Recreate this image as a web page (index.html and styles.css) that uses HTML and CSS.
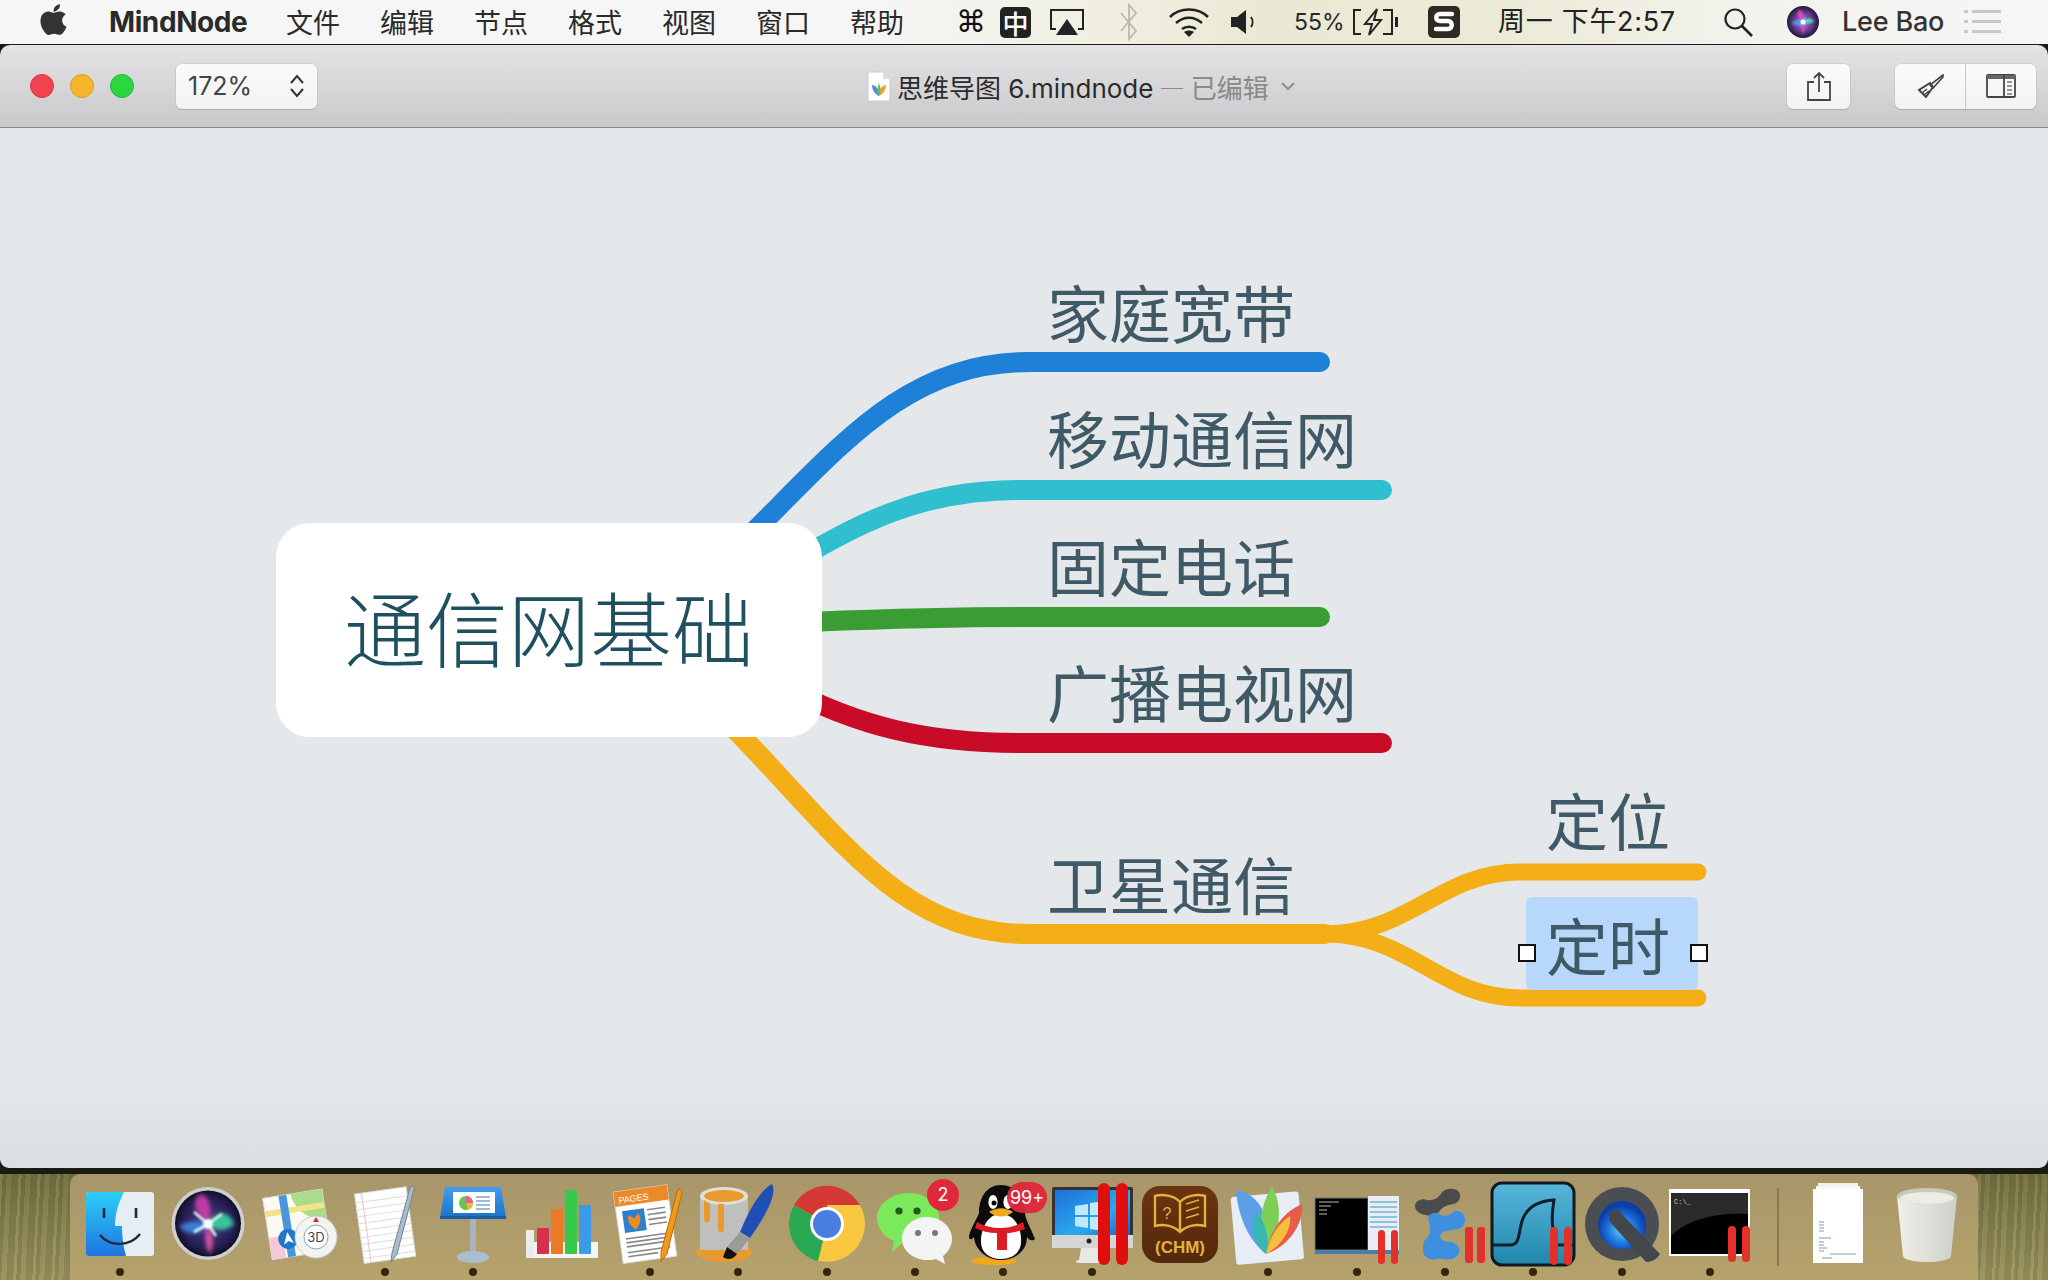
FILE: index.html
```html
<!DOCTYPE html>
<html lang="zh-CN">
<head>
<meta charset="utf-8">
<title>MindNode</title>
<link rel="stylesheet" href="styles.css">
</head>
<body>
<header class="menubar">
  <svg class="apple" viewBox="0 0 24 24"><path d="M17.05 20.28c-.98.95-2.05.8-3.08.35-1.09-.46-2.09-.48-3.24 0-1.44.62-2.2.44-3.06-.35C2.79 15.25 3.51 7.59 9.05 7.31c1.35.07 2.29.74 3.08.8 1.18-.24 2.31-.93 3.57-.84 1.51.12 2.65.72 3.4 1.8-3.12 1.87-2.38 5.98.48 7.13-.57 1.5-1.31 2.99-2.54 4.09zM12.03 7.25c-.15-2.23 1.66-4.07 3.74-4.25.29 2.58-2.34 4.5-3.74 4.25z"/></svg>
  <span class="app-name">MindNode</span>
  <nav class="menu">
    <span>文件</span><span>编辑</span><span>节点</span><span>格式</span><span>视图</span><span>窗口</span><span>帮助</span>
  </nav>
  <div class="tray">
    <span class="cmd-key">⌘</span>
    <span class="ime">中</span>
    <svg class="t-airplay" viewBox="0 0 36 28"><path d="M7 21H2V2h32v19h-5" fill="none" stroke="#222" stroke-width="2"/><path d="M18 11l11 16H7z" fill="#222"/></svg>
    <svg class="t-bt" viewBox="0 0 20 38"><path d="M2 10l15 18-7 8V2l7 8-15 18" fill="none" stroke="#b9b9ae" stroke-width="1.8"/></svg>
    <svg class="t-wifi" viewBox="0 0 42 32"><g fill="none" stroke="#222" stroke-width="2.6"><path d="M2 11C12 1 30 1 40 11"/><path d="M8 17c8-7 18-7 26 0"/><path d="M14 23c4-3 10-3 14 0"/></g><path d="M21 31l-5-5c3-2 7-2 10 0z" fill="#222"/></svg>
    <svg class="t-vol" viewBox="0 0 28 26"><path d="M1 8h6l9-7v24l-9-7H1z" fill="#222"/><path d="M21 8c2 3 2 7 0 10" fill="none" stroke="#222" stroke-width="1.8"/></svg>
    <span class="t-pct">55%</span>
    <svg class="t-batt" viewBox="0 0 47 28"><path d="M9 2H2v24h7M31 2h9v24h-9" fill="none" stroke="#222" stroke-width="2"/><path d="M25 1L13 16h7l-3 11 12-15h-7z" fill="none" stroke="#222" stroke-width="2"/><rect x="43" y="9" width="3" height="10" fill="#222"/></svg>
    <svg class="t-sogou" viewBox="0 0 32 32"><rect width="32" height="32" rx="5" fill="#2d2a20"/><path d="M24 8H12c-5 0-5 7 0 7h8c5 0 5 8 0 8H8" fill="none" stroke="#fff" stroke-width="4.4" stroke-linecap="round"/></svg>
    <span class="t-time">周一 下午2:57</span>
    <svg class="t-search" viewBox="0 0 30 30"><circle cx="12" cy="12" r="9.5" fill="none" stroke="#222" stroke-width="2.2"/><path d="M19 19l10 10" stroke="#222" stroke-width="2.6"/></svg>
    <svg class="t-siri" viewBox="0 0 32 32"><defs><radialGradient id="ts"><stop offset="0" stop-color="#9ff"/><stop offset=".35" stop-color="#8c4fc0"/><stop offset="1" stop-color="#1c1a3a"/></radialGradient><filter id="tsb"><feGaussianBlur stdDeviation=".8"/></filter></defs><circle cx="16" cy="16" r="16" fill="url(#ts)"/><g filter="url(#tsb)"><path d="M16 16C10 11 9 6 13 4c4 3 4 8 3 12z" fill="#e04fb0"/><path d="M16 16c4-5 8-4 11-1-3 3-7 3-11 1z" fill="#4fe0b0"/><path d="M16 16c-3 4-7 4-11 1 3-3 7-3 11-1z" fill="#4f9fe8"/><path d="M16 16c2 4 2 8 0 12-2-4-2-8 0-12z" fill="#e04fb0"/></g><circle cx="16" cy="16" r="2.500" fill="#eaffff"/></svg>
    <span class="t-user">Lee Bao</span>
    <svg class="t-list" viewBox="0 0 37 24"><g fill="#c8c8c8"><rect width="4" height="3"/><rect x="8" width="29" height="3"/><rect y="10" width="4" height="3"/><rect x="8" y="10" width="29" height="3"/><rect y="20" width="4" height="3"/><rect x="8" y="20" width="29" height="3"/></g></svg>
  </div>
</header>

<main class="window">
  <div class="toolbar">
    <div class="lights"><i class="light red"></i><i class="light amber"></i><i class="light green"></i></div>
    <div class="zoom-select">
      <span>172%</span>
      <svg class="updown" viewBox="0 0 16 24"><path d="M2 9l6-7 6 7M2 15l6 7 6-7" fill="none" stroke="#333" stroke-width="2"/></svg>
    </div>
    <div class="doc-title">
      <svg class="doc-icon" viewBox="0 0 24 31"><path d="M1 1h15l7 7v22H1z" fill="#fff" stroke="#ccc"/><path d="M16 1v7h7" fill="#ddd"/><path d="M12 25c-4-2-7-6-7-11 3 0 5 2 7 6z" fill="#4a90e2"/><path d="M12 25c4-2 7-6 7-11-3 0-5 2-7 6z" fill="#e8a33d"/><path d="M12 25c-2-4-2-8 0-13 2 5 2 9 0 13z" fill="#6cc04a"/></svg>
      <span class="doc-name">思维导图 6.mindnode</span>
      <span class="doc-state">— 已编辑</span>
      <svg class="doc-chevron" viewBox="0 0 14 9"><path d="M1 1l6 6 6-6" fill="none" stroke="#8c8c8c" stroke-width="2"/></svg>
    </div>
    <button class="tool share" type="button"><svg viewBox="0 0 26 30" class="i-share"><path d="M8 11H2v18h22V11h-6M13 21V2M8 7l5-5 5 5" fill="none" stroke="#444" stroke-width="1.8"/></svg></button>
    <div class="tool-pair">
      <button class="tool-seg" type="button"><svg viewBox="0 0 28 24" class="i-brush"><path d="M27 1L14 11l3 3L27 3z" fill="none" stroke="#444" stroke-width="1.6"/><path d="M14 9L3 16l7 7 7-10z" fill="none" stroke="#444" stroke-width="2"/><path d="M6 19l5-4M8 21l5-4" stroke="#444" stroke-width="1.4"/></svg></button>
      <button class="tool-seg" type="button"><svg viewBox="0 0 30 24" class="i-panel"><rect x="1" y="1" width="28" height="22" rx="1" fill="none" stroke="#444" stroke-width="1.8"/><rect x="1" y="1" width="28" height="4" fill="#666"/><path d="M18 1v22" stroke="#444" stroke-width="1.8"/><path d="M21 8h5M21 12h5M21 16h5M21 20h5" stroke="#777" stroke-width="1.6"/></svg></button>
    </div>
  </div>

  <section class="canvas">
    <svg class="links" viewBox="0 0 2048 1040">
      <g transform="translate(0,-128)" fill="none" stroke-linecap="round">
        <path class="l-blue" d="M692 590C822 475 885 362 1030 362H1320"/>
        <path class="l-cyan" d="M780 570C860 522 920 490 1020 490H1382"/>
        <path class="l-green" d="M780 623C860 620 920 617 1020 617H1320"/>
        <path class="l-red" d="M780 685C860 728 930 743 1020 743H1382"/>
        <path class="l-orange" d="M696 690C835 825 890 934 1030 934H1325"/>
        <path class="l-sub" d="M1325 934C1410 934 1440 872 1520 872H1698"/>
        <path class="l-sub" d="M1325 934C1410 934 1440 998 1520 998H1698"/>
      </g>
    </svg>
    <div class="node root">通信网基础</div>
    <div class="node n1">家庭宽带</div>
    <div class="node n2">移动通信网</div>
    <div class="node n3">固定电话</div>
    <div class="node n4">广播电视网</div>
    <div class="node n5">卫星通信</div>
    <div class="node n6">定位</div>
    <div class="selected"></div>
    <div class="node n7">定时</div>
    <i class="handle h-left"></i>
    <i class="handle h-right"></i>
  </section>
</main>

<footer class="desk">
  <div class="dock">
    <div class="item"><svg viewBox="0 0 88 88"><defs><linearGradient id="fb" x1="0" y1="0" x2="0" y2="1"><stop offset="0" stop-color="#2bd0f7"/><stop offset="1" stop-color="#1f74e0"/></linearGradient></defs><rect x="10" y="12" width="68" height="64" rx="3" fill="#e6edf3"/><path d="M13 12h35c-6 12-9 22-9 34h7c0 10 1 20 4 30H13a3 3 0 0 1-3-3V15a3 3 0 0 1 3-3z" fill="url(#fb)"/><path d="M28 28v10M60 28v10" stroke="#1c2a3a" stroke-width="2.6"/><path d="M24 55c10 12 30 12 40-1" fill="none" stroke="#1c2a3a" stroke-width="2.4"/></svg><i class="dot"></i></div>
    <div class="item"><svg viewBox="0 0 88 88"><defs><radialGradient id="sb"><stop offset="0" stop-color="#4a3a7c"/><stop offset=".75" stop-color="#251f55"/><stop offset="1" stop-color="#101024"/></radialGradient><filter id="sf"><feGaussianBlur stdDeviation="2.200"/></filter></defs><circle cx="44" cy="43.5" r="36.5" fill="#cfcfcf"/><circle cx="44" cy="43.500" r="33" fill="url(#sb)"/><g filter="url(#sf)"><path d="M44 44C30 34 26 18 38 14c10 6 10 18 6 30z" fill="#c03aa6"/><path d="M44 44c10-16 22-12 26 0-8 8-18 8-26 0z" fill="#37c49a"/><path d="M44 44C36 56 24 56 15 46c10-6 20-6 29-2z" fill="#3d7fd8"/><path d="M44 44c6 10 6 22 2 30-6-8-6-20-2-30z" fill="#d94fa6"/></g><g filter="url(#tsb)"><path d="M44 44L30 32M44 44l14-10M44 44L30 52M44 44l8 12" stroke="#d8fbff" stroke-width="2.600"/><circle cx="44" cy="44" r="5" fill="#f2ffff"/></g></svg><i class="dot off"></i></div>
    <div class="item"><svg viewBox="0 0 88 88"><g transform="rotate(-9 40 44)"><rect x="14" y="14" width="60" height="62" fill="#fbfaf3" stroke="#ddd"/><path d="M42 14h32v30C56 44 44 30 42 14z" fill="#a9dc8b"/><path d="M14 30h60" stroke="#f1e58a" stroke-width="6"/><rect x="30" y="14" width="8" height="62" fill="#4a96dc"/><rect x="14" y="54" width="14" height="22" fill="#f4c8d8"/><circle cx="33" cy="58" r="10" fill="#1f76cf"/><path d="M33 51l5 12-5-3-5 3z" fill="#fff"/></g><circle cx="63" cy="57" r="21" fill="#f3f3f1" stroke="#ccc"/><circle cx="63" cy="57" r="12" fill="#fff" stroke="#88a7bd"/><text class="txt-3d" x="63" y="62" text-anchor="middle">3D</text><path d="M63 37l3 5h-6z" fill="#d9302a"/></svg><i class="dot off"></i></div>
    <div class="item"><svg viewBox="0 0 88 88"><g transform="rotate(-8 45 44)"><rect x="18" y="10" width="52" height="70" fill="#fff" stroke="#ddd"/><path d="M18 19h52M18 26h52M18 33h52M18 40h52M18 47h52M18 54h52M18 61h52M18 68h52M18 75h52" stroke="#ddd" stroke-width="1"/><path d="M25 10v70" stroke="#f0c0cc" stroke-width="1"/></g><path d="M50 82l1-9L69 8c1-3 5-2 4 1L56 74z" fill="#a9bccd" stroke="#708495"/></svg><i class="dot"></i></div>
    <div class="item"><svg viewBox="0 0 88 88"><defs><linearGradient id="kb" x1="0" y1="0" x2="0" y2="1"><stop offset="0" stop-color="#3f9df0"/><stop offset="1" stop-color="#1c71c7"/></linearGradient></defs><path d="M16 7h56l5 31H11z" fill="url(#kb)"/><rect x="11" y="36" width="66" height="3" fill="#1a5ea6"/><rect x="24" y="12" width="42" height="21" fill="#fff"/><circle cx="37" cy="23" r="7" fill="#69c34c"/><path d="M37 23V16a7 7 0 0 1 7 7z" fill="#e95d9b"/><path d="M37 23h7a7 7 0 0 1-5 6.700z" fill="#f2b632"/><path d="M47 17h14M47 21h14M47 25h14M47 29h14" stroke="#7fa4d0" stroke-width="1.6"/><rect x="41" y="39" width="6" height="36" fill="#aab4bd"/><ellipse cx="44" cy="77" rx="16" ry="6" fill="#a9bfd0"/></svg><i class="dot"></i></div>
    <div class="item"><svg viewBox="0 0 88 88"><rect x="8" y="62" width="72" height="16" fill="#f4f4f0"/><rect x="8" y="50" width="8" height="28" fill="#ecece8"/><rect x="19" y="48" width="12" height="26" rx="1" fill="#d92e4d"/><rect x="33" y="29" width="12" height="45" rx="1" fill="#ec7a24"/><rect x="47" y="10" width="12" height="64" rx="1" fill="#37c94a"/><rect x="61" y="25" width="12" height="49" rx="1" fill="#3c9ae8"/></svg><i class="dot off"></i></div>
    <div class="item"><svg viewBox="0 0 88 88"><g transform="rotate(-8 40 44)"><rect x="12" y="8" width="54" height="72" fill="#fff" stroke="#ddd"/><rect x="12" y="8" width="54" height="15" fill="#ec8a2a"/><text class="txt-pages" x="16" y="20">PAGES</text><rect x="18" y="28" width="22" height="22" fill="#2f7fcf"/><path d="M29 48c-7-6-7-12-5-15l5 4 5-5c2 5 2 11-5 16z" fill="#f08a1e"/><path d="M43 30h18M43 35h18M43 40h18M43 45h18M18 56h43M18 60h43M18 64h43M18 70h43M18 74h30" stroke="#888" stroke-width="1.6"/></g><path d="M55 82l0-10L71 12c1-4 5-3 5 1L61 74z" fill="#ef9a1f" stroke="#b96d0b"/></svg><i class="dot"></i></div>
    <div class="item"><svg viewBox="0 0 88 88"><ellipse cx="30" cy="72" rx="28" ry="10" fill="#e99a2e"/><rect x="6" y="16" width="48" height="54" fill="#bfc0bd"/><ellipse cx="30" cy="16" rx="24" ry="9" fill="#dfdfda"/><ellipse cx="30" cy="16" rx="20" ry="6" fill="#e99a2e"/><path d="M10 20v18c0 6 6 6 6 0V24zM24 24v24c0 6 6 6 6 0V24z" fill="#e99a2e"/><path d="M78 4C84 14 70 38 56 58l-10-6C54 32 66 10 78 4z" fill="#1f4fb5"/><path d="M56 58L43 74l-10-7 13-15z" fill="#9a9a9a"/><path d="M43 74c-4 6-10 6-14 3l4-10z" fill="#111"/></svg><i class="dot"></i></div>
    <div class="item"><svg viewBox="0 0 88 88"><circle cx="44" cy="44" r="38" fill="#f9c642"/><path d="M44 44L11 25A38 38 0 0 1 77 25H44z" fill="#d43a33"/><path d="M44 44L11 25A38 38 0 0 0 35 81z" fill="#2aa852"/><circle cx="44" cy="44" r="17" fill="#fff"/><circle cx="44" cy="44" r="14" fill="#4a7de0"/></svg><i class="dot"></i></div>
    <div class="item"><svg viewBox="0 0 88 88"><path d="M38 13c17 0 30 11 30 25 0 14-13 25-30 25l-8 1-9 8 2-11C12 56 6 47 6 38c0-14 15-25 32-25z" fill="#7ce95a"/><circle cx="28" cy="31" r="3.6" fill="#26591a"/><circle cx="46" cy="31" r="3.6" fill="#26591a"/><path d="M56 37c14 0 25 10 25 22 0 7-4 13-9 17l2 8-9-5c-3 1-6 1-9 1-14 0-25-10-25-21 0-12 11-22 25-22z" fill="#f4f4f4"/><circle cx="47" cy="53" r="3" fill="#777"/><circle cx="64" cy="53" r="3" fill="#777"/><circle cx="72" cy="15" r="16" fill="#e0283a"/><text class="badge-text" x="72" y="21" text-anchor="middle">2</text></svg><i class="dot"></i></div>
    <div class="item"><svg viewBox="0 0 88 88"><ellipse cx="35" cy="81" rx="23" ry="4" fill="#f2a71a"/><path d="M42 5c14 0 24 12 24 28 0 6 6 16 10 26-3 3-7 0-8-2 0 14-12 23-26 23S16 70 15 57c-2 3-5 3-5 0 1-8 8-18 10-24C20 17 28 5 42 5z" fill="#0b0b0b"/><path d="M42 34c14 0 21 15 20 28 0 10-8 17-20 17s-20-7-20-17c0-13 6-28 20-28z" fill="#fff"/><ellipse cx="34" cy="22" rx="4.600" ry="7" fill="#fff"/><ellipse cx="49" cy="22" rx="4.600" ry="7" fill="#fff"/><circle cx="35" cy="23" r="2.500" fill="#000"/><path d="M30 32c8-5 16-5 24 0-8 6-16 6-24 0z" fill="#f2a71a"/><path d="M18 42c14 8 32 8 46 0l2 7c-6 2-12 4-18 4v17H38V53c-8 0-16-2-22-5z" fill="#dc1c23"/><rect x="48" y="2" width="40" height="31" rx="15.500" fill="#e0283a" opacity=".96"/><text class="badge-text" x="68" y="24" text-anchor="middle">99+</text></svg><i class="dot"></i></div>
    <div class="item"><svg viewBox="0 0 88 88"><defs><linearGradient id="pw" x1="0" y1="0" x2="1" y2="1"><stop offset="0" stop-color="#1d6fd8"/><stop offset=".6" stop-color="#2ba9f0"/><stop offset="1" stop-color="#1865c9"/></linearGradient></defs><path d="M33 68h22l2 12c4 0 4 3 0 3H31c-4 0-4-3 0-3z" fill="#e8e8e8"/><rect x="4" y="7" width="81" height="60" rx="2" fill="#333"/><rect x="7" y="10" width="75" height="45" fill="url(#pw)"/><path d="M27 26l13-2v11H27zM42 23l14-2v14H42zM27 37h13v11l-13-2zM42 37h14v14l-14-2z" fill="#bfeaff"/><rect x="4" y="55" width="81" height="13" fill="#d6d6d6"/><circle cx="41" cy="61" r="2.500" fill="#222"/><rect x="50" y="3" width="12" height="82" rx="6" fill="#e10e0e"/><rect x="68" y="3" width="12" height="82" rx="6" fill="#e10e0e"/></svg><i class="dot"></i></div>
    <div class="item"><svg viewBox="0 0 88 88"><defs><linearGradient id="cb" x1="0" y1="0" x2="0" y2="1"><stop offset="0" stop-color="#6c3410"/><stop offset="1" stop-color="#53290d"/></linearGradient></defs><rect x="6" y="6" width="76" height="77" rx="18" fill="url(#cb)"/><path d="M44 22C38 15 26 14 19 16v30c8-2 18-1 25 6 7-7 17-8 25-6V16c-7-2-19-1-25 6zM44 22v30" fill="none" stroke="#e3b23c" stroke-width="2.400"/><text class="txt-q" x="31" y="39" text-anchor="middle">?</text><path d="M50 24l13-4M50 31l13-4M50 38l13-4" stroke="#e3b23c" stroke-width="1.400"/><text class="txt-chm" x="44" y="73" text-anchor="middle">(CHM)</text></svg><i class="dot off"></i></div>
    <div class="item"><svg viewBox="0 0 88 88"><g transform="rotate(-5 44 44)"><rect x="9" y="14" width="68" height="68" rx="3" fill="#e8eef5"/></g><path d="M42 74C24 60 14 36 12 10c14 2 26 12 30 30z" fill="#5d9fe6"/><path d="M42 74C34 52 34 30 48 6c10 18 10 44-6 68z" fill="#7fce55"/><path d="M42 74c4-22 16-42 36-50 2 18-12 42-36 50z" fill="#e85c4a"/><path d="M42 74c4-18 12-30 24-38 2 12-8 30-24 38z" fill="#f3bf3c"/><path d="M42 74C28 62 26 44 32 32c10 10 14 26 10 42z" fill="#37b7b0"/></svg><i class="dot"></i></div>
    <div class="item"><svg viewBox="0 0 88 88"><rect x="2" y="18" width="53" height="52" fill="#000" stroke="#777"/><path d="M6 22h20M6 26h12M6 30h8M6 34h8" stroke="#bbb" stroke-width="1"/><rect x="55" y="16" width="31" height="54" fill="#e8eef2"/><path d="M57 22h27M57 27h27M57 32h27M57 37h27M57 42h27M57 47h27" stroke="#8fc2df" stroke-width="2"/><rect x="2" y="70" width="84" height="4" fill="#4a7ea8"/><rect class="pause" x="65" y="50" width="7" height="34" rx="3.500"/><rect class="pause" x="78" y="50" width="7" height="34" rx="3.500"/></svg><i class="dot"></i></div>
    <div class="item"><svg viewBox="0 0 88 88"><path d="M14 26c0-6 8-8 12-6 5 1 10-1 14-6 3-6 14-7 18-2 3 5 0 11-6 12-6 1-11 3-14 8-5 6-24 4-24-6z" fill="#4b4b4b"/><path d="M24 60c6-4 6-12 4-18-3-6 4-12 10-8 6 3 10 2 14-2 8-4 16 5 10 14-5 6-18 2-22 8-3 5 4 8 8 8 8 0 14 8 8 14-6 6-14 2-20 3-6 2-14-2-14-8 0-5 0-8 2-11z" fill="#3f8fe0"/><rect class="pause" x="64" y="47" width="8" height="36" rx="3"/><rect class="pause" x="76" y="47" width="8" height="36" rx="3"/></svg><i class="dot"></i></div>
    <div class="item"><svg viewBox="0 0 88 88"><defs><linearGradient id="wb" x1="0" y1="0" x2="0" y2="1"><stop offset="0" stop-color="#58b7da"/><stop offset="1" stop-color="#1f87ac"/></linearGradient></defs><rect x="3" y="3" width="82" height="82" rx="10" fill="url(#wb)" stroke="#101820" stroke-width="3"/><path d="M3 65h18c10 0 8-10 12-24 4-12 14-20 32-21-3 16-2 32 3 45h17" fill="none" stroke="#0f1e28" stroke-width="3"/><rect class="pause" x="61" y="47" width="8" height="38" rx="4"/><rect class="pause" x="75" y="47" width="8" height="38" rx="4"/></svg><i class="dot"></i></div>
    <div class="item"><svg viewBox="0 0 88 88"><defs><radialGradient id="qb" cx=".5" cy=".6"><stop offset="0" stop-color="#5fd4f2"/><stop offset=".6" stop-color="#1d72e0"/><stop offset="1" stop-color="#0b3fa8"/></radialGradient></defs><circle cx="44" cy="44" r="37" fill="#4a4d52"/><circle cx="44" cy="45" r="24" fill="url(#qb)"/><path d="M40 30l42 44c-3 5-8 8-14 8L32 42c-4-8 2-16 8-12z" fill="#43464b"/></svg><i class="dot"></i></div>
    <div class="item"><svg viewBox="0 0 88 88"><rect x="3" y="9" width="81" height="67" fill="#fff"/><rect x="5" y="13" width="77" height="61" fill="#000"/><path d="M5 13h77v21C50 32 20 40 5 56z" fill="#2a2a2a"/><text class="txt-cmd" x="8" y="24">C:\_</text><rect class="pause" x="62" y="46" width="8" height="36" rx="4"/><rect class="pause" x="76" y="46" width="8" height="36" rx="4"/></svg><i class="dot"></i></div>
    <i class="dock-sep"></i>
    <div class="item"><svg viewBox="0 0 88 88"><rect x="24" y="3" width="40" height="20" fill="#f1f1ec"/><rect x="22" y="6" width="44" height="20" fill="#f8f8f4"/><rect x="19" y="9" width="50" height="74" fill="#fff"/><path d="M25 42h5M25 45h5M25 48h5M25 51h5M25 58h12M25 62h5M25 65h5M25 68h8M25 71h5M36 74h26M28 78h10" stroke="#7fa0b4" stroke-width="1.200"/></svg></div>
    <div class="item"><svg viewBox="0 0 88 88"><defs><linearGradient id="tb" x1="0" y1="0" x2="1" y2="0"><stop offset="0" stop-color="#f0efea"/><stop offset=".5" stop-color="#e0e0da"/><stop offset="1" stop-color="#cfcfca"/></linearGradient></defs><path d="M14 16c0-6 60-6 60 0l-6 60c-2 8-46 8-48 0z" fill="url(#tb)"/><ellipse cx="44" cy="16" rx="30" ry="8" fill="#c9c8bd"/><ellipse cx="44" cy="18" rx="27" ry="6" fill="#ececE6"/></svg></div>
  </div>
</footer>
</body>
</html>
```

FILE: styles.css
```css
* { box-sizing: border-box; }
html, body { margin: 0; height: 100%; }
body {
  width: 2048px;
  height: 1280px;
  overflow: hidden;
  display: flex;
  flex-direction: column;
  background: #1c1b14;
  font-family: "Noto Sans CJK SC", "Noto Sans", sans-serif;
}

/* menu bar */
.menubar {
  height: 45px;
  flex: none;
  display: flex;
  align-items: center;
  padding-left: 40px;
  border-bottom: 1px solid #1c1b14;
  background: linear-gradient(90deg, #f6f6f6 0, #f6f6f6 42%, #f1f0e4 52%, #ebe9d4 62%, #ecebd8 74%, #f3f3ee 86%, #f6f6f6 100%);
  color: #2a2a2a;
  font-size: 27px;
  line-height: 44px;
}
.apple { width: 41px; height: 41px; fill: #333; margin: -6px 35px 0 -7px; flex: none; }
.app-name { font-family: Inter, "Liberation Sans", sans-serif; font-weight: 700; font-size: 28px; width: 139px; letter-spacing: -.4px; white-space: nowrap; }
.menu { display: flex; gap: 40px; margin-left: 38px; }
.tray { display: flex; align-items: center; margin-left: 52px; }
.cmd-key { font-family: "DejaVu Sans", sans-serif; font-size: 30px; width: 26px; text-align: center; color: #111; }
.ime { width: 31px; height: 31px; margin-left: 18px; background: #222; color: #fff; border-radius: 5px; display: flex; align-items: center; justify-content: center; font-size: 26px; line-height: 31px; font-weight: 500; }
.t-airplay { width: 36px; height: 28px; margin-left: 18px; }
.t-bt { width: 20px; height: 38px; margin-left: 34px; }
.t-wifi { width: 42px; height: 32px; margin-left: 29px; }
.t-vol { width: 28px; height: 26px; margin-left: 20px; }
.t-pct { font-family: Inter, "Liberation Sans", sans-serif; font-size: 23px; width: 50px; margin-left: 36px; white-space: nowrap; }
.t-batt { width: 47px; height: 28px; margin-left: 8px; }
.t-sogou { width: 32px; height: 32px; margin-left: 29px; }
.t-time { font-size: 27px; width: 180px; margin-left: 38px; white-space: nowrap; font-family: Inter, "Noto Sans CJK SC", sans-serif; color: #222; letter-spacing: .7px; }
.t-search { width: 30px; height: 30px; margin-left: 45px; }
.t-siri { width: 32px; height: 32px; margin-left: 34px; }
.t-user { font-family: Inter, "Liberation Sans", sans-serif; font-size: 27px; font-weight: 500; width: 103px; margin-left: 23px; white-space: nowrap; letter-spacing: -.2px; color: #333; }
.t-list { width: 37px; height: 24px; margin-left: 19px; }

/* window */
.window {
  height: 1123px;
  flex: none;
  display: flex;
  flex-direction: column;
  border-radius: 10px 10px 9px 9px;
  overflow: hidden;
}
.toolbar {
  height: 83px;
  flex: none;
  display: flex;
  align-items: center;
  padding: 0 12px 0 30px;
  background: linear-gradient(#e4e3e6, #c9c9cc);
  border-bottom: 1px solid #8a8a8a;
}
.lights { display: flex; gap: 16px; }
.light { width: 24px; height: 24px; border-radius: 50%; display: block; }
.red { background: #f2424f; border: 1px solid #d9353f; }
.amber { background: #f7b52c; border: 1px solid #dc9d22; }
.green { background: #2bd641; border: 1px solid #22b834; }
.zoom-select {
  width: 141px;
  height: 45px;
  margin-left: 42px;
  padding: 0 12px;
  display: flex;
  align-items: center;
  justify-content: space-between;
  background: linear-gradient(#fbfbfb, #f2f2f2);
  border-radius: 6px;
  box-shadow: 0 1px 1px #a9a9a9, 0 0 0 .5px #c4c4c4;
  font-family: Inter, "Liberation Sans", sans-serif;
  font-size: 25px;
  color: #444;
}
.updown { width: 16px; height: 24px; }
.doc-title {
  margin-left: 550px;
  display: flex;
  align-items: center;
  font-size: 26px;
  color: #2b2b2b;
  white-space: nowrap;
}
.doc-icon { width: 24px; height: 31px; margin-right: 6px; }
.doc-name { font-family: Inter, "Noto Sans CJK SC", sans-serif; font-size: 26px; width: 255px; font-weight: 400; }
.doc-state { color: #8a8a8a; margin-left: 7px; width: 116px; font-family: "Noto Sans CJK SC", sans-serif; }
.doc-chevron { width: 14px; height: 9px; margin-left: 6px; }
.tool {
  width: 63px;
  height: 45px;
  margin-left: auto;
  padding: 0;
  border: 0;
  border-radius: 6px;
  background: linear-gradient(#fbfbfb, #f2f2f2);
  box-shadow: 0 1px 1px #a9a9a9, 0 0 0 .5px #c4c4c4;
  display: flex;
  align-items: center;
  justify-content: center;
}
.i-share { width: 26px; height: 30px; }
.tool-pair {
  width: 141px;
  height: 45px;
  margin-left: 45px;
  display: flex;
  border-radius: 6px;
  background: linear-gradient(#fbfbfb, #f2f2f2);
  box-shadow: 0 1px 1px #a9a9a9, 0 0 0 .5px #c4c4c4;
}
.tool-seg {
  flex: 1;
  padding: 0;
  border: 0;
  background: none;
  display: flex;
  align-items: center;
  justify-content: center;
}
.tool-seg + .tool-seg { border-left: 1px solid #c8c8c8; }
.i-brush { width: 28px; height: 24px; }
.i-panel { width: 30px; height: 24px; }

/* canvas */
.canvas {
  flex: 1;
  position: relative;
  background: linear-gradient(#e4e8eb 0, #e4e8eb 92%, #dadde1 100%);
}
.links { position: absolute; left: 0; top: 0; width: 2048px; height: 1040px; }
.links path { stroke-width: 20px; }
.l-blue { stroke: #1f80d8; }
.l-cyan { stroke: #2fbfcf; }
.l-green { stroke: #3a9d34; }
.l-red { stroke: #c80c28; }
.l-orange { stroke: #f4ae16; }
.links .l-sub { stroke: #f4ae16; stroke-width: 17px; }
.node {
  position: absolute;
  color: #3f5a66;
  font-size: 62px;
  line-height: 80px;
  font-weight: 400;
  white-space: nowrap;
}
.root {
  left: 276px;
  top: 395px;
  width: 546px;
  height: 214px;
  padding-bottom: 8px;
  border-radius: 34px;
  background: #fff;
  color: #1f5060;
  font-size: 82px;
  font-weight: 300;
  display: flex;
  align-items: center;
  justify-content: center;
}
.n1 { left: 1047px; top: 143px; }
.n2 { left: 1047px; top: 269px; }
.n3 { left: 1047px; top: 397px; }
.n4 { left: 1047px; top: 523px; }
.n5 { left: 1047px; top: 715px; }
.n6 { left: 1546px; top: 651px; }
.n7 { left: 1546px; top: 776px; }
.selected {
  position: absolute;
  left: 1526px;
  top: 769px;
  width: 172px;
  height: 93px;
  border-radius: 6px;
  background: #b8d8fb;
}
.handle {
  position: absolute;
  top: 816px;
  width: 18px;
  height: 18px;
  background: #fff;
  border: 2px solid #111;
}
.h-left { left: 1518px; }
.h-right { left: 1690px; }

/* dock and wallpaper */
.desk {
  flex: 1;
  padding: 6px 0 0 70px;
  background:
    linear-gradient(#1c1b12 6px, transparent 6px),
    repeating-linear-gradient(93deg, rgba(215,200,135,.16) 0 3px, rgba(70,70,30,.14) 3px 7px, rgba(190,180,115,.12) 7px 12px, rgba(85,85,40,.16) 12px 19px),
    linear-gradient(#6c6a3e, #9a9360);
}
.dock {
  width: 1908px;
  height: 106px;
  padding: 6px 0 0 6px;
  display: flex;
  border-radius: 10px 10px 0 0;
  background: linear-gradient(#a8966a, #b5a26c);
}
.item { width: 88.33px; flex: none; display: flex; flex-direction: column; align-items: center; }
.item svg { width: 88px; height: 88px; flex: none; overflow: visible; }
.dot { width: 8px; height: 8px; border-radius: 50%; background: #33260c; display: block; }
.dot.off { visibility: hidden; }
.dock-sep { width: 2px; height: 78px; margin: 8px 15px 0 23px; background: #8a7a50; flex: none; }
.pause { fill: #e2302a; }
.badge-text { font-family: Inter, "Liberation Sans", sans-serif; font-size: 18px; fill: #fff; }
.txt-3d { font-family: Inter, "Liberation Sans", sans-serif; font-size: 13px; fill: #3a4a5a; }
.txt-pages { font-family: "Liberation Sans", sans-serif; font-size: 9px; fill: #fff; }
.txt-q { font-family: "Liberation Sans", sans-serif; font-size: 16px; fill: #e3b23c; }
.txt-chm { font-family: "Liberation Sans", sans-serif; font-size: 17px; font-weight: 700; fill: #e3b23c; }
.txt-cmd { font-family: "Liberation Mono", monospace; font-size: 7px; fill: #ccc; }
```
